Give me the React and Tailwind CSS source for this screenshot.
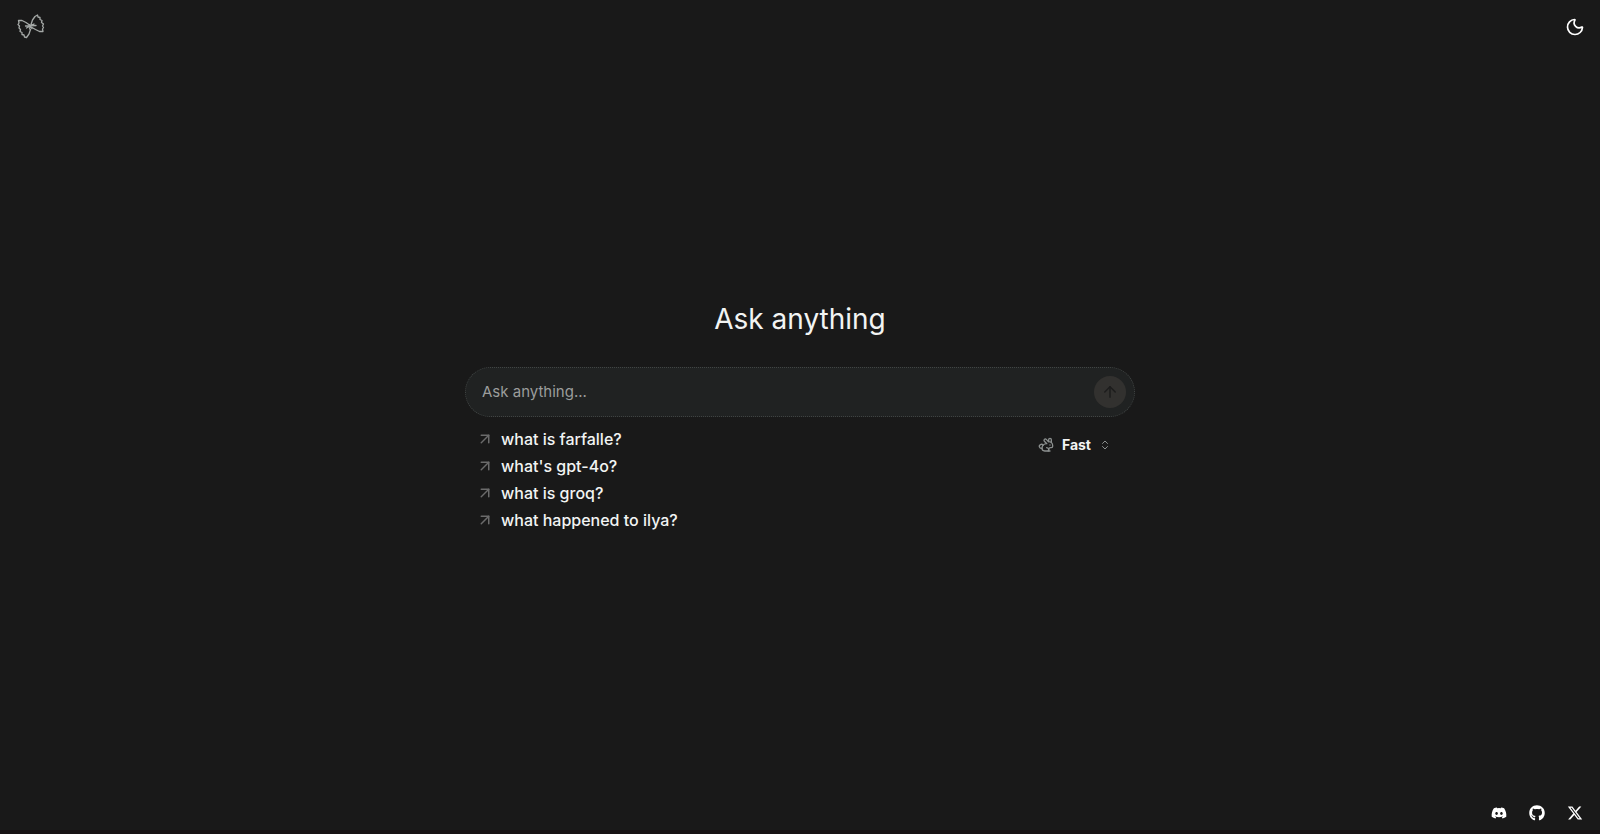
import React, { useState } from 'react';
import { ArrowUp, ArrowUpRight, ChevronsUpDown, Moon, Rabbit } from 'lucide-react';
import { FaDiscord, FaGithub } from 'react-icons/fa';
import { FaXTwitter } from 'react-icons/fa6';

const SUGGESTIONS = [
    'what is farfalle?',
    "what's gpt-4o?",
    'what is groq?',
    'what happened to ilya?',
];

const Logo = () => (
    <svg viewBox="0 0 28 26" className="w-7 h-[26px]" fill="none" stroke="#a4a8a6" strokeWidth="1.3" strokeLinejoin="round" strokeLinecap="round">
        <path d="M12.5 11 L9 8.5 L5 6.5 L1.5 6.5 L2 9 L1 10.5 L2.5 12 L2 14 L3.5 15.5 L3 17.5 L5 18.5 L5 20.5 L7 21 L7.5 23 L9.5 23.5 L12 20 L13.5 15.5" />
        <path d="M14 10.5 L15.5 6 L18 2.5 L20.5 1 L21 3 L23 3.5 L23 5.5 L25 6.5 L24.5 8.5 L26.5 10 L25.5 12 L26.5 13.5 L25.5 15 L26 17.5 L22.5 17.5 L18.5 15.5 L15 13.5" />
        <path d="M8.5 12 L19 11.5 M9.5 14 L17 10 M12 10.5 L15 14.5 M12.5 15 L14.5 10" />
    </svg>
);

const Header = () => (
    <header className="flex items-center justify-between h-[54px] pl-[17px] pr-[15px]">
        <a href="#home" aria-label="Farfalle"><Logo /></a>
        <button aria-label="Toggle theme"><Moon className="w-5 h-5 text-white" /></button>
    </header>
);

const AskInput = () => {
    const [input, setInput] = useState('');
    return (
        <form onSubmit={e => e.preventDefault()} className="flex items-center w-full h-[50px] pl-4 pr-2 rounded-full border border-dotted border-[#414544] bg-[#202222]">
            <input
                aria-label="Ask anything"
                className="flex-1 min-w-0 bg-transparent text-[15px] text-white outline-none placeholder:text-[#9b9d9c]"
                placeholder="Ask anything..."
                value={input}
                onChange={e => setInput(e.target.value)}
            />
            <button aria-label="Send" className="flex items-center justify-center w-8 h-8 rounded-full bg-[#32312f]">
                <ArrowUp className="w-[18px] h-[18px] text-[#1d1d1d]" />
            </button>
        </form>
    );
};

const Suggestions = () => (
    <ul className="pl-[11px]">
        {SUGGESTIONS.map(text => (
            <li key={text}>
                <button className="flex items-center gap-[7px] h-[27px] text-base font-medium text-[#f2f4f3]">
                    <ArrowUpRight className="w-[18px] h-[18px] text-[#6b6b6b]" />
                    {text}
                </button>
            </li>
        ))}
    </ul>
);

const Footer = () => (
    <footer className="flex items-center justify-end gap-[22px] h-[38px] px-[17px] border-b-4 border-[#171315] text-white">
        <a href="#discord" aria-label="Discord"><FaDiscord className="w-4 h-4" /></a>
        <a href="#github" aria-label="GitHub"><FaGithub className="w-4 h-4" /></a>
        <a href="#x" aria-label="X"><FaXTwitter className="w-4 h-4" /></a>
    </footer>
);

const App = () => (
    <div className="flex flex-col min-h-screen bg-[#191919] font-['Inter',sans-serif]">
        <Header />
        <main className="flex-1 flex flex-col items-center justify-center px-4 pb-4">
            <div className="w-full max-w-[670px]">
                <h1 className="mb-[30px] text-center text-[28px] leading-9 text-[#f2f4f3]">Ask anything</h1>
                <AskInput />
                <div className="flex items-start justify-between pt-2">
                    <Suggestions />
                    <button className="flex items-center gap-2 h-10 mr-6 text-sm font-bold text-[#f2f4f3]">
                        <Rabbit className="w-4 h-4 text-[#8b8f8e]" />
                        Fast
                        <ChevronsUpDown className="w-3 h-3 text-[#8b8f8e]" />
                    </button>
                </div>
            </div>
        </main>
        <Footer />
    </div>
);

export default App;
